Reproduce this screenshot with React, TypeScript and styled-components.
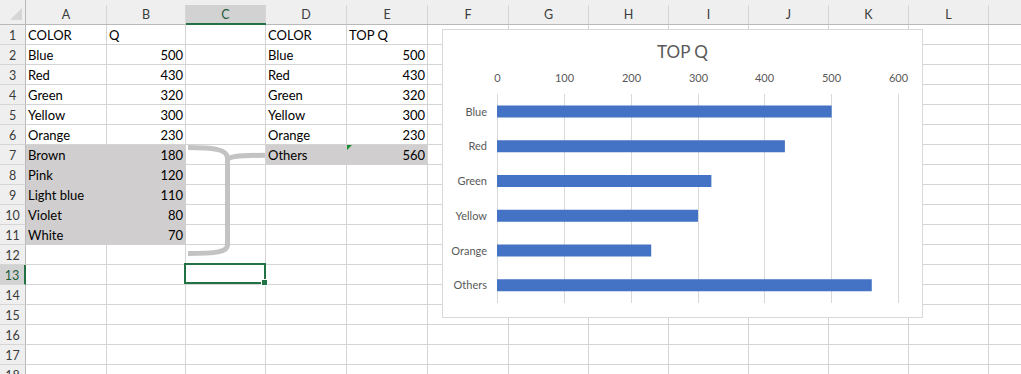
import React from "react";
import styled, { createGlobalStyle, css } from "styled-components";

const GlobalStyle = createGlobalStyle`
  html, body {
    margin: 0;
    padding: 0;
    background: #ffffff;
    overflow: hidden;
  }
`;

const GRID = "#d4d4d4";
const HEAD_BG = "#efefef";
const HEAD_LINE = "#b9b9b9";
const FILL = "#d0cece";
const GREEN = "#217346";
const BAR = "#4472c4";
const CHART_TEXT = "#595959";

const colWidths = [81, 79, 80, 81, 81, 81, 80, 80, 80, 80, 80, 80, 80];
// M is past the window edge, its letter is not visible
const letters = "ABCDEFGHIJKL".split("").concat([""]);
const ROWS = 18;

type Val = string | number;

const leftTable: Val[][] = [
  ["COLOR", "Q"],
  ["Blue", 500],
  ["Red", 430],
  ["Green", 320],
  ["Yellow", 300],
  ["Orange", 230],
  ["Brown", 180],
  ["Pink", 120],
  ["Light blue", 110],
  ["Violet", 80],
  ["White", 70],
];

const rightTable: Val[][] = [
  ["COLOR", "TOP Q"],
  ["Blue", 500],
  ["Red", 430],
  ["Green", 320],
  ["Yellow", 300],
  ["Orange", 230],
  ["Others", 560],
];

const Sheet = styled.div`
  position: relative;
  display: grid;
  grid-template-columns: 26px ${colWidths.map((w) => `${w}px`).join(" ")};
  grid-template-rows: 25px repeat(${ROWS}, 20px);
  width: max-content;
  font-family: Lato, "Liberation Sans", sans-serif;
  font-size: 13px;
  color: #000;
`;

const Corner = styled.div`
  box-sizing: border-box;
  background: ${HEAD_BG};
  border-right: 1px solid ${HEAD_LINE};
  border-bottom: 1px solid ${HEAD_LINE};
  display: flex;
  align-items: flex-end;
  justify-content: flex-end;
  padding: 0 3px 4px 0;
`;

const ColHeader = styled.div<{ $selected?: boolean }>`
  box-sizing: border-box;
  background: ${HEAD_BG};
  border-bottom: 1px solid ${HEAD_LINE};
  display: flex;
  padding-top: 5px;
  span {
    flex: 1;
    display: flex;
    align-items: center;
    justify-content: center;
    border-right: 1px solid #d6d6d6;
    font-size: 12.5px;
    color: #3b3b3b;
  }
  ${(p) =>
    p.$selected &&
    css`
      border-bottom: 2px solid ${GREEN};
      span {
        background: #d2d2d2;
        color: #1d5a38;
      }
    `}
`;

const RowHeader = styled.div<{ $selected?: boolean }>`
  box-sizing: border-box;
  background: ${(p) => (p.$selected ? "#d2d2d2" : HEAD_BG)};
  border-right: ${(p) => (p.$selected ? `2px solid ${GREEN}` : `1px solid ${HEAD_LINE}`)};
  border-bottom: 1px solid #d6d6d6;
  display: flex;
  align-items: center;
  justify-content: center;
  padding-top: 1px;
  font-size: 12.5px;
  color: ${(p) => (p.$selected ? "#1d5a38" : "#3b3b3b")};
`;

const Cell = styled.div<{ $fill?: boolean; $num?: boolean }>`
  position: relative;
  box-sizing: border-box;
  border-right: 1px solid ${(p) => (p.$fill ? FILL : GRID)};
  border-bottom: 1px solid ${(p) => (p.$fill ? FILL : GRID)};
  background: ${(p) => (p.$fill ? FILL : "#fff")};
  line-height: 19px;
  white-space: nowrap;
  padding: ${(p) => (p.$num ? "1px 2px 0 0" : "1px 0 0 2px")};
  text-align: ${(p) => (p.$num ? "right" : "left")};
`;

const Selection = styled.div`
  position: absolute;
  left: -2px;
  top: -2px;
  right: -1px;
  bottom: 0;
  border: 2px solid ${GREEN};
  z-index: 3;
  &::after {
    content: "";
    position: absolute;
    right: -4px;
    bottom: -4px;
    width: 5px;
    height: 5px;
    background: ${GREEN};
    border: 1px solid #fff;
  }
`;

const ErrorMark = styled.div`
  position: absolute;
  left: 0;
  top: 0;
  width: 0;
  height: 0;
  border-top: 5px solid #1e8c2e;
  border-right: 5px solid transparent;
`;

const BraceLayer = styled.svg`
  position: absolute;
  left: 0;
  top: 0;
  pointer-events: none;
  z-index: 2;
`;

const ChartBox = styled.div`
  position: absolute;
  left: 442px;
  top: 29px;
  width: 481px;
  height: 289px;
  box-sizing: border-box;
  border: 1px solid #d9d9d9;
  background: #fff;
  z-index: 4;
  svg {
    display: block;
    font-family: Lato, "Liberation Sans", sans-serif;
  }
`;

const chartData: [string, number][] = [
  ["Blue", 500],
  ["Red", 430],
  ["Green", 320],
  ["Yellow", 300],
  ["Orange", 230],
  ["Others", 560],
];

function Chart() {
  const x0 = 54;
  const step = 401 / 600;
  const ticks = [0, 100, 200, 300, 400, 500, 600];
  const pitch = 34.75;
  return (
    <ChartBox>
      <svg width={479} height={287}>
        <text x={239.5} y={27.5} fontSize={17} fill={CHART_TEXT} textAnchor="middle">
          TOP Q
        </text>
        {ticks.map((t) => {
          const x = Math.round(x0 + t * step) + 0.5;
          return (
            <g key={t}>
              <line x1={x} x2={x} y1={64} y2={273} stroke="#d9d9d9" strokeWidth={1} />
              <text x={x} y={52} fontSize={11} fill={CHART_TEXT} textAnchor="middle">
                {t}
              </text>
            </g>
          );
        })}
        {chartData.map(([name, v], i) => {
          const cy = 81.5 + i * pitch;
          return (
            <g key={name}>
              <rect x={x0} y={cy - 6} width={v * step + 0.5} height={12} fill={BAR} />
              <text x={44} y={cy + 4} fontSize={11} fill={CHART_TEXT} textAnchor="end">
                {name}
              </text>
            </g>
          );
        })}
      </svg>
    </ChartBox>
  );
}

function cellValue(row: number, col: number): Val | undefined {
  if (col <= 1) return leftTable[row - 1]?.[col];
  if (col === 3 || col === 4) return rightTable[row - 1]?.[col - 3];
  return undefined;
}

function isFilled(row: number, col: number) {
  if (col <= 1 && row >= 7 && row <= 11) return true;
  if ((col === 3 || col === 4) && row === 7) return true;
  return false;
}

export default function App() {
  const selRow = 13;
  const selCol = 2;
  return (
    <>
      <GlobalStyle />
      <Sheet>
        <Corner>
          <svg width={12} height={12}>
            <polygon points="12,0 12,12 0,12" fill="#d6d6d6" />
          </svg>
        </Corner>
        {letters.map((l, i) => (
          <ColHeader key={i} $selected={i === selCol}>
            <span>{l}</span>
          </ColHeader>
        ))}
        {Array.from({ length: ROWS }, (_, r) => {
          const row = r + 1;
          return (
            <React.Fragment key={row}>
              <RowHeader $selected={row === selRow}>{row}</RowHeader>
              {letters.map((_l, c) => {
                const v = cellValue(row, c);
                const num = typeof v === "number";
                return (
                  <Cell key={c} $fill={isFilled(row, c)} $num={num}>
                    {v}
                    {row === 7 && c === 4 && <ErrorMark />}
                    {row === selRow && c === selCol && <Selection />}
                  </Cell>
                );
              })}
            </React.Fragment>
          );
        })}
        <BraceLayer width={300} height={300}>
          <g fill="none" stroke="#c3c3c3" strokeWidth={5}>
            <path d="M188,147.5 C212,147.5 227.5,149 227.5,158 L227.5,245 C227.5,252 216,253.5 188,253.5" />
            <path d="M227.5,161 C227.5,156.5 236,155.5 265,155.2" />
          </g>
        </BraceLayer>
        <Chart />
      </Sheet>
    </>
  );
}
